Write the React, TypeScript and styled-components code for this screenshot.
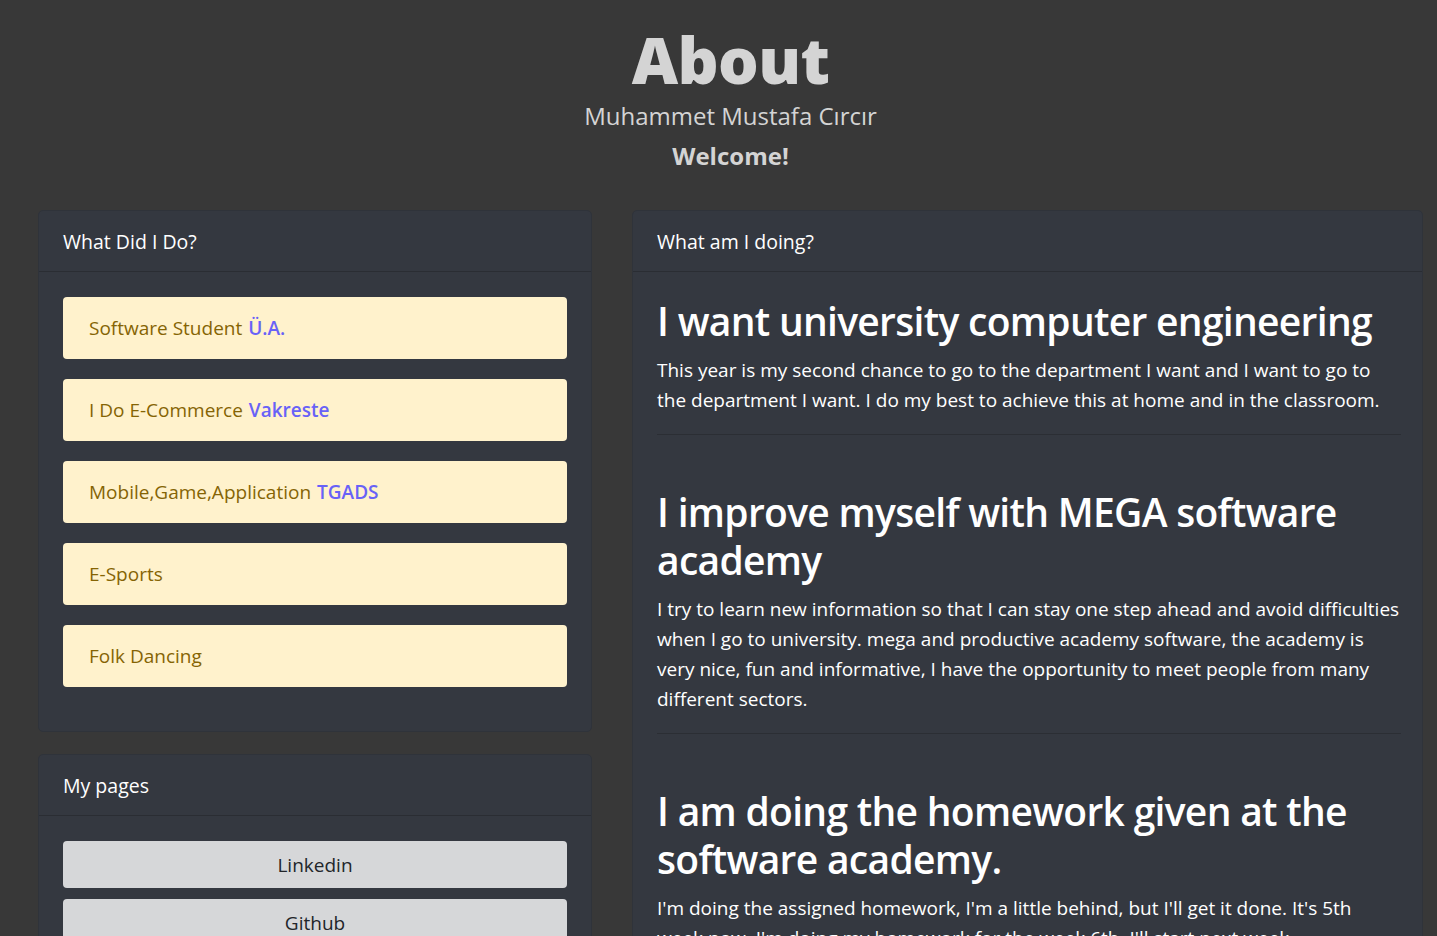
import styled, { createGlobalStyle } from "styled-components";

const GlobalStyle = createGlobalStyle`
  html, body {
    margin: 0;
    padding: 0;
    background: #383838;
  }
  body {
    font-family: "Open Sans", "Noto Sans", sans-serif;
    color: #fff;
  }
  * { box-sizing: border-box; }
`;

const Page = styled.div`
  width: 1437px;
  padding: 0 14px 40px 38px;
`;

const Hero = styled.header`
  display: flex;
  flex-direction: column;
  align-items: center;
  padding-top: 22px;
  color: #d4d4d4;
  text-align: center;
`;

const Title = styled.h1`
  margin: 0;
  font-family: "Open Sans", sans-serif;
  font-size: 64px;
  font-weight: 800;
  letter-spacing: -0.6px;
  line-height: 76px;
`;

const Name = styled.h3`
  margin: 0;
  font-size: 24px;
  font-weight: 500;
  line-height: 36px;
`;

const Welcome = styled.h3`
  margin: 4px 0 0;
  font-size: 24px;
  font-weight: 700;
  line-height: 36px;
`;

const Columns = styled.main`
  display: grid;
  grid-template-columns: 554px 791px;
  gap: 40px;
  margin-top: 36px;
  align-items: start;
`;

const Side = styled.div`
  display: flex;
  flex-direction: column;
  gap: 22px;
`;

const Card = styled.section`
  background: #343840;
  border: 1px solid #2f333a;
  border-radius: 5px;
  overflow: hidden;
`;

const CardHeader = styled.div`
  height: 61px;
  padding: 0 24px;
  display: flex;
  align-items: center;
  font-size: 19.5px;
  border-bottom: 1px solid #2a2d33;
`;

const CardBody = styled.div<{ $bottom?: number; $right?: number }>`
  padding: 25px ${(p) => p.$right ?? 24}px ${(p) => p.$bottom ?? 24}px 24px;
  display: flex;
  flex-direction: column;
`;

const Alert = styled.div`
  background: #fff2cc;
  color: #856404;
  border-radius: 4px;
  height: 62px;
  padding: 0 26px;
  display: flex;
  align-items: center;
  font-size: 19px;
  margin-bottom: 20px;
  &:last-child { margin-bottom: 0; }
`;

const AlertLink = styled.a`
  color: #6862f7;
  font-weight: 600;
  text-decoration: none;
  margin-left: 6px;
`;

const LinkButton = styled.a`
  display: flex;
  align-items: center;
  justify-content: center;
  height: 47px;
  background: #d6d7d9;
  color: #222529;
  border-radius: 4px;
  font-size: 19px;
  text-decoration: none;
  margin-bottom: 11px;
`;

const Article = styled.article`
  & + & {
    border-top: 1px solid #2b2e34;
    margin-top: 19px;
    padding-top: 53px;
  }
`;

const Heading = styled.h2`
  margin: 0 0 10px;
  font-size: 39px;
  font-weight: 600;
  letter-spacing: -0.7px;
  line-height: 48px;
`;

const Lead = styled.p`
  margin: 0;
  font-size: 19px;
  line-height: 30px;
`;

const items = [
  { text: "Software Student", link: "Ü.A." },
  { text: "I Do E-Commerce", link: "Vakreste" },
  { text: "Mobile,Game,Application", link: "TGADS" },
  { text: "E-Sports" },
  { text: "Folk Dancing" },
];

const posts = [
  {
    title: "I want university computer engineering",
    body: "This year is my second chance to go to the department I want and I want to go to the department I want. I do my best to achieve this at home and in the classroom.",
  },
  {
    title: "I improve myself with MEGA software academy",
    body: "I try to learn new information so that I can stay one step ahead and avoid difficulties when I go to university. mega and productive academy software, the academy is very nice, fun and informative, I have the opportunity to meet people from many different sectors.",
  },
  {
    title: "I am doing the homework given at the software academy.",
    body: "I'm doing the assigned homework, I'm a little behind, but I'll get it done. It's 5th week now. I'm doing my homework for the week 6th. I'll start next week.",
  },
];

export default function App() {
  return (
    <Page>
      <GlobalStyle />
      <Hero>
        <Title>About</Title>
        <Name>Muhammet Mustafa Cırcır</Name>
        <Welcome>Welcome!</Welcome>
      </Hero>
      <Columns>
        <Side>
          <Card>
            <CardHeader>What Did I Do?</CardHeader>
            <CardBody $bottom={44}>
              {items.map((it) => (
                <Alert key={it.text}>
                  {it.text}
                  {it.link && <AlertLink href="#">{it.link}</AlertLink>}
                </Alert>
              ))}
            </CardBody>
          </Card>
          <Card>
            <CardHeader>My pages</CardHeader>
            <CardBody>
              <LinkButton href="#">Linkedin</LinkButton>
              <LinkButton href="#">Github</LinkButton>
              <LinkButton href="#">Instagram</LinkButton>
            </CardBody>
          </Card>
        </Side>
        <Card>
          <CardHeader>What am I doing?</CardHeader>
          <CardBody $right={21}>
            {posts.map((p) => (
              <Article key={p.title}>
                <Heading>{p.title}</Heading>
                <Lead>{p.body}</Lead>
              </Article>
            ))}
          </CardBody>
        </Card>
      </Columns>
    </Page>
  );
}
